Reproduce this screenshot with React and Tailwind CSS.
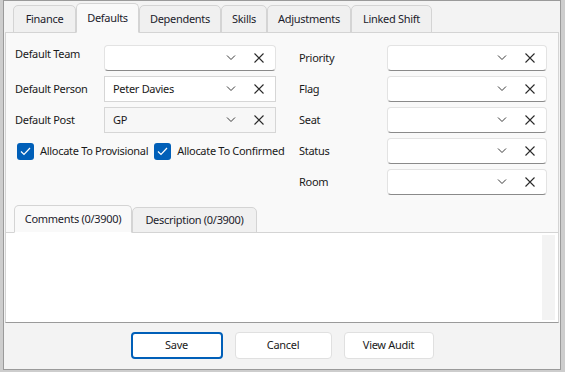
import React from 'react';

const Chevron = () => (
    <svg width="10" height="6" viewBox="0 0 10 6" fill="none" stroke="#3a3a3a" strokeWidth="1">
        <path d="M1 0.5 L5 4.5 L9 0.5" />
    </svg>
);

const Cross = () => (
    <svg width="10" height="10" viewBox="0 0 10 10" fill="none" stroke="#2a2a2a" strokeWidth="1.1">
        <path d="M0.5 0.5 L9.5 9.5 M9.5 0.5 L0.5 9.5" />
    </svg>
);

const Combo = ({ value, variant = 'fluent', width = 'w-[172px]' }) => {
    const styles = {
        fluent: 'bg-white border border-[#e3e3e3] border-b-[#8a8a8a] rounded-[4px]',
        flat: 'bg-white border border-[#d6d6d6]',
        disabled: 'bg-[#f7f7f7] border border-[#d6d6d6]',
    };
    return (
        <div className={`${width} h-[26px] shrink-0 flex items-center pl-[8px] pr-[11px] ${styles[variant]}`}>
            <span className="flex-1 whitespace-nowrap">{value}</span>
            <span className="w-[10px] flex justify-center mr-[18px]"><Chevron /></span>
            <Cross />
        </div>
    );
};

const Check = ({ label }) => (
    <label className="flex items-center gap-[6px] whitespace-nowrap">
        <span className="w-[17px] h-[17px] shrink-0 rounded-[3px] bg-[#005fb8] flex items-center justify-center">
            <svg width="11" height="9" viewBox="0 0 11 9" fill="none" stroke="white" strokeWidth="1.2">
                <path d="M1 4.5 L4 7.5 L10 1" />
            </svg>
        </span>
        <span>{label}</span>
    </label>
);

const tabs = ['Finance', 'Defaults', 'Dependents', 'Skills', 'Adjustments', 'Linked Shift'];
const tabWidths = ['w-[63px]', 'w-[63px]', 'w-[82px]', 'w-[46px]', 'w-[84px]', 'w-[81px]'];

const App = () => {
    const leftRows = [
        { label: 'Default Team', value: '', variant: 'fluent', raise: true },
        { label: 'Default Person', value: 'Peter Davies', variant: 'flat' },
        { label: 'Default Post', value: 'GP', variant: 'disabled' },
    ];
    const rightRows = ['Priority', 'Flag', 'Seat', 'Status', 'Room'];

    return (
        <div className="w-[565px] h-[372px] bg-[#cdcdcd] pl-[3px] pr-[4px] pb-[2px] font-['Noto_Sans',sans-serif] text-[11px] tracking-[-0.3px] text-[#1a1a1a] overflow-hidden">
            <div className="w-full h-full bg-[#f3f3f3] border border-[#9a9a9a] flex flex-col">
                {/* Tab strip */}
                <div className="h-[31px] flex items-end pl-[9px] shrink-0">
                    {tabs.map((t, i) => (
                        <div
                            key={t}
                            className={`${tabWidths[i]} flex items-center justify-center text-[#1c1c2c] rounded-t-[5px] border border-[#d4d4d4] -mb-px ${
                                i === 1
                                    ? 'h-[30px] bg-[#f9f9f9] border-b-[#f9f9f9] z-10'
                                    : 'h-[28px] bg-[#f0f0f0]'
                            }`}
                        >
                            {t}
                        </div>
                    ))}
                </div>

                {/* Tab pane */}
                <div className="mx-[1px] h-[291px] bg-[#f9f9f9] border border-[#d4d4d4] border-b-[#9a9a9a] flex flex-col shrink-0">
                    <div className="flex pt-[12px] pl-[9px] gap-[23px]">
                        <div className="w-[261px] flex flex-col gap-[5px]">
                            {leftRows.map(r => (
                                <div key={r.label} className="flex items-center h-[26px]">
                                    <span className={`w-[89px] whitespace-nowrap ${r.raise ? '-mt-[8px]' : ''}`}>{r.label}</span>
                                    <Combo value={r.value} variant={r.variant} />
                                </div>
                            ))}
                            <div className="flex items-center h-[26px] pl-[2px] gap-[6px]">
                                <Check label="Allocate To Provisional" />
                                <Check label="Allocate To Confirmed" />
                            </div>
                        </div>
                        <div className="flex flex-col gap-[5px]">
                            {rightRows.map(r => (
                                <div key={r} className="flex items-center h-[26px]">
                                    <span className="w-[88px]">{r}</span>
                                    <Combo variant="fluent" width="w-[160px]" />
                                </div>
                            ))}
                        </div>
                    </div>

                    {/* Inner tabs */}
                    <div className="flex items-end pl-[8px] mt-[9px] h-[28px]">
                        <div className="w-[118px] h-[28px] flex items-center justify-center text-[#1c1c2c] bg-[#f9f9f9] border border-[#d4d4d4] border-b-white rounded-t-[5px] -mb-px z-10">
                            Comments (0/3900)
                        </div>
                        <div className="w-[125px] h-[26px] flex items-center justify-center text-[#1c1c2c] bg-[#f0f0f0] border border-[#d4d4d4] rounded-t-[5px] -mb-px">
                            Description (0/3900)
                        </div>
                    </div>
                    <div className="flex-1 bg-white border-t border-[#d4d4d4] flex justify-end pr-[3px] py-[2px]">
                        <div className="w-[13px] h-full bg-[#f3f3f3]" />
                    </div>
                </div>

                {/* Buttons */}
                <div className="flex-1 flex items-center justify-center gap-[12px] pb-[2px]">
                    <button className="w-[92px] h-[27px] bg-white border-2 border-[#005fb8] rounded-[4px]">Save</button>
                    <button className="w-[97px] h-[27px] bg-white border border-[#e0e0e0] rounded-[4px]">Cancel</button>
                    <button className="w-[90px] h-[27px] bg-white border border-[#e0e0e0] rounded-[4px]">View Audit</button>
                </div>
            </div>
        </div>
    );
};

export default App;
